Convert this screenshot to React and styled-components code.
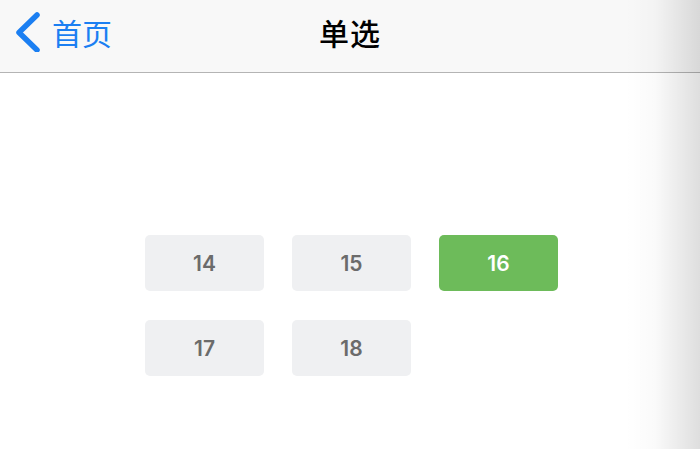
import React, { useState } from 'react';
import styled, { createGlobalStyle } from 'styled-components';

const GlobalStyle = createGlobalStyle`
  html, body {
    margin: 0;
    padding: 0;
    background: #ffffff;
    font-family: "Noto Sans", "Noto Sans CJK SC", sans-serif;
  }
`;

const Page = styled.div`
  position: relative;
  width: 700px;
  height: 449px;
  overflow: hidden;
  background: #ffffff;
`;

const NavBar = styled.div`
  height: 64px;
  padding-bottom: 8px;
  border-bottom: 1px solid #b4b4b4;
  background: #f8f8f8;
  display: flex;
  align-items: center;
  justify-content: center;
  position: relative;
`;

const BackLink = styled.a`
  position: absolute;
  left: 14px;
  top: 0;
  height: 64px;
  display: flex;
  align-items: center;
  gap: 10px;
  color: #1b7ff2;
  font-family: "Noto Sans CJK SC", sans-serif;
  font-size: 30px;
  text-decoration: none;
`;

const Title = styled.div`
  font-family: "Noto Sans CJK SC", sans-serif;
  font-size: 30px;
  font-weight: 500;
  color: #000000;
  letter-spacing: 1px;
`;

const Options = styled.div`
  display: grid;
  grid-template-columns: repeat(3, 119px);
  column-gap: 28px;
  row-gap: 29px;
  padding: 162px 0 0 145px;
`;

const Option = styled.button`
  height: 56px;
  border: none;
  border-radius: 5px;
  background: ${p => (p.$active ? '#6dbb5a' : '#eff0f2')};
  color: ${p => (p.$active ? '#ffffff' : '#6b6b6b')};
  font-family: Inter, sans-serif;
  font-size: 21px;
  font-weight: 600;
  cursor: pointer;
  padding: 0;
`;

const EdgeShadow = styled.div`
  position: absolute;
  top: 0;
  right: 0;
  width: 75px;
  height: 100%;
  pointer-events: none;
  background: linear-gradient(to right, rgba(0,0,0,0) 0%, rgba(0,0,0,0.02) 40%, rgba(0,0,0,0.13) 100%);
`;

const values = [14, 15, 16, 17, 18];

export default function App() {
  const [selected, setSelected] = useState(16);
  return (
    <Page>
      <GlobalStyle />
      <NavBar>
        <BackLink href="#">
          <svg width="28" height="40" viewBox="0 0 28 40">
            <path d="M23 3 L5 20.5 L23 38" fill="none" stroke="#1b7ff2" strokeWidth="5.5" strokeLinecap="round" strokeLinejoin="round" />
          </svg>
          首页
        </BackLink>
        <Title>单选</Title>
      </NavBar>
      <Options>
        {values.map(v => (
          <Option key={v} $active={v === selected} onClick={() => setSelected(v)}>
            {v}
          </Option>
        ))}
      </Options>
      <EdgeShadow />
    </Page>
  );
}
